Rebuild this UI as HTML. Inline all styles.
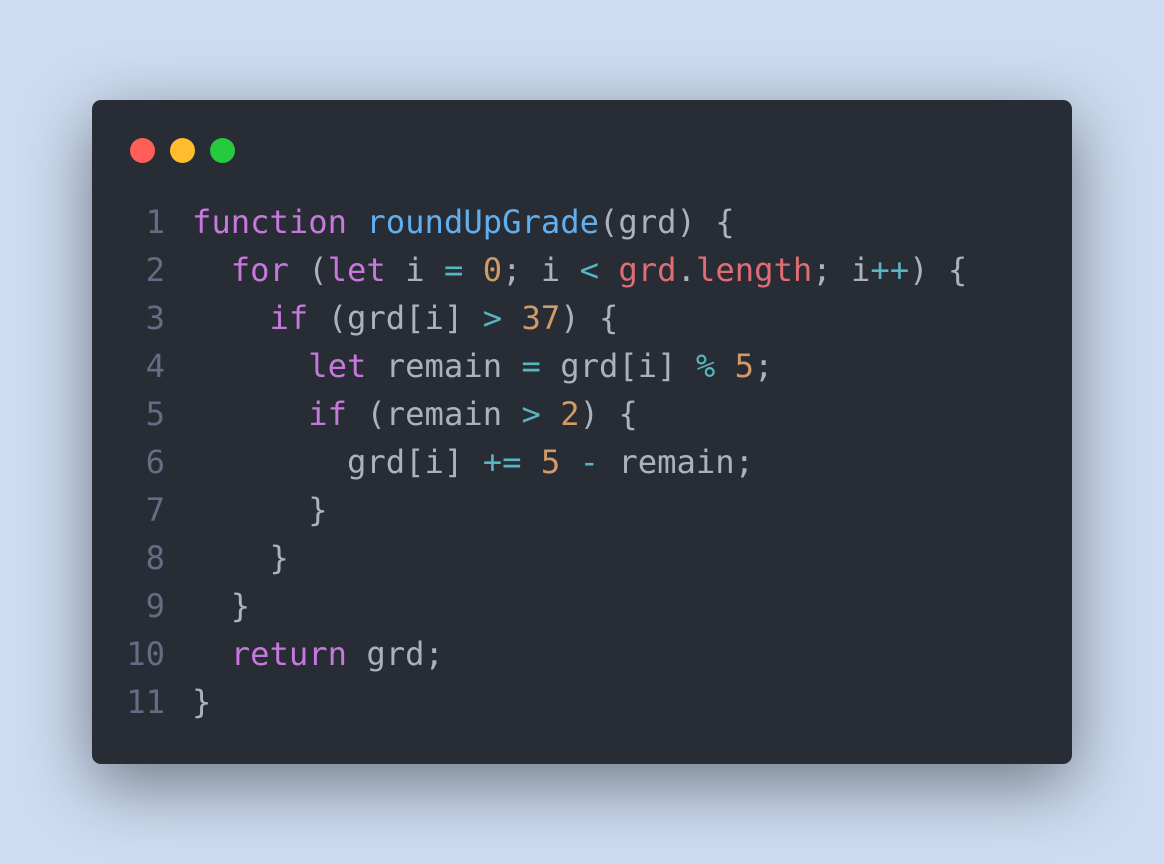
<!DOCTYPE html>
<html><head><meta charset="utf-8"><style>
html,body{margin:0;width:1164px;height:864px;overflow:hidden;background:#cddcf1;}
.win{position:absolute;left:92px;top:100px;width:980px;height:664px;background:#282c34;border-radius:9px;box-shadow:0 20px 68px rgba(0,0,0,0.45);}
.dot{position:absolute;top:38px;width:25px;height:25px;border-radius:50%;}
.code{position:absolute;left:0;top:98px;font-family:"DejaVu Sans Mono","Liberation Mono",monospace;font-size:32.2px;line-height:48px;color:#abb2bf;white-space:pre;}
.ln{display:inline-block;width:73px;text-align:right;color:#636d83;margin-right:27px;}
.k{color:#c678dd}.f{color:#61afef}.o{color:#56b6c2}.n{color:#d19a66}.r{color:#e06c75}
</style></head><body>
<div class="win">
<div class="dot" style="left:38px;background:#ff5f56"></div>
<div class="dot" style="left:78px;background:#ffbd2e"></div>
<div class="dot" style="left:118px;background:#27c93f"></div>
<div class="code"><div><span class="ln">1</span><span class="k">function</span> <span class="f">roundUpGrade</span>(grd) {</div><div><span class="ln">2</span>  <span class="k">for</span> (<span class="k">let</span> i <span class="o">=</span> <span class="n">0</span>; i <span class="o">&lt;</span> <span class="r">grd</span>.<span class="r">length</span>; i<span class="o">++</span>) {</div><div><span class="ln">3</span>    <span class="k">if</span> (grd[i] <span class="o">&gt;</span> <span class="n">37</span>) {</div><div><span class="ln">4</span>      <span class="k">let</span> remain <span class="o">=</span> grd[i] <span class="o">%</span> <span class="n">5</span>;</div><div><span class="ln">5</span>      <span class="k">if</span> (remain <span class="o">&gt;</span> <span class="n">2</span>) {</div><div><span class="ln">6</span>        grd[i] <span class="o">+=</span> <span class="n">5</span> <span class="o">-</span> remain;</div><div><span class="ln">7</span>      }</div><div><span class="ln">8</span>    }</div><div><span class="ln">9</span>  }</div><div><span class="ln">10</span>  <span class="k">return</span> grd;</div><div><span class="ln">11</span>}</div></div>
</div>
</body></html>
